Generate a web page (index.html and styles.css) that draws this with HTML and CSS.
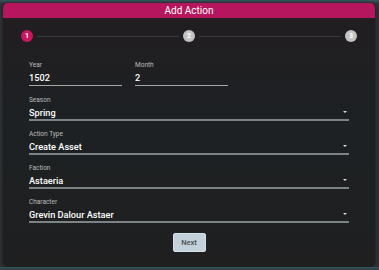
FILE: index.html
```html
<!DOCTYPE html>
<html lang="en">

<head>
    <meta charset="UTF-8">
    <title>Add Action</title>
    <link rel="stylesheet" href="styles.css">
</head>

<body>
    <div class="dialog">
        <div class="dialog-title">Add Action</div>

        <div class="stepper">
            <span class="step active">1</span>
            <span class="step-line"></span>
            <span class="step">2</span>
            <span class="step-line"></span>
            <span class="step">3</span>
        </div>

        <form class="form">
            <div class="row">
                <div class="field text-field">
                    <label>Year</label>
                    <div class="value">1502</div>
                </div>
                <div class="field text-field">
                    <label>Month</label>
                    <div class="value">2</div>
                </div>
            </div>
            <div class="field select-field">
                <label>Season</label>
                <div class="value">Spring<span class="arrow"></span></div>
            </div>
            <div class="field select-field">
                <label>Action Type</label>
                <div class="value">Create Asset<span class="arrow"></span></div>
            </div>
            <div class="field select-field">
                <label>Faction</label>
                <div class="value">Astaeria<span class="arrow"></span></div>
            </div>
            <div class="field select-field">
                <label>Character</label>
                <div class="value">Grevin Dalour Astaer<span class="arrow"></span></div>
            </div>
            <div class="actions">
                <button type="button">Next</button>
            </div>
        </form>
    </div>
</body>

</html>
```

FILE: styles.css
```css
body {
    margin: 0;
    background: linear-gradient(#2f5a5c 0, #3a3440 3px, #2c3033 4px);
    font-family: 'Roboto', 'Liberation Sans', sans-serif;
    color: #fff;
}
.dialog {
    margin: 3px 4px 0 3px;
    height: 264px;
    border-radius: 5px;
    overflow: hidden;
    background: linear-gradient(#221d21, #1d2123 45%, #1f1f20);
    box-shadow: 0 0 2px rgba(0, 0, 0, 0.6);
}
.dialog-title {
    height: 15px;
    line-height: 15px;
    background-color: #b5165d;
    text-align: center;
    font-size: 10px;
}
.stepper {
    display: flex;
    align-items: center;
    padding: 12px 18px 0 18px;
}
.step {
    width: 12px;
    height: 12px;
    border-radius: 50%;
    background-color: #c2c2c2;
    color: #fff;
    font-size: 7px;
    font-weight: bold;
    line-height: 12px;
    text-align: center;
}
.step.active {
    background-color: #c8175f;
}
.step-line {
    flex: 1;
    height: 1px;
    margin: 0 4px;
    background-color: #3a3c3e;
}
.form {
    margin: 19px 0 0 0;
    padding: 0 26px;
}
.row {
    display: flex;
    gap: 13px;
    margin-bottom: 10px;
}
.field label {
    display: block;
    height: 9px;
    line-height: 9px;
    font-size: 6.5px;
    color: #bdbdbd;
}
.field .value {
    display: flex;
    align-items: center;
    justify-content: space-between;
    font-size: 9.2px;
    font-weight: 500;
}
.text-field {
    width: 93px;
}
.text-field .value {
    height: 15px;
    border-bottom: 1px solid #a4a8a8;
}
.select-field {
    margin-bottom: 9px;
}
.select-field .value {
    height: 14px;
    border-bottom: 2px solid #7b8384;
}
.arrow {
    width: 0;
    height: 0;
    margin-right: 2px;
    border-left: 2.5px solid transparent;
    border-right: 2.5px solid transparent;
    border-top: 2.5px solid #dedede;
}
.actions {
    display: flex;
    justify-content: center;
    padding-top: 1px;
}
button {
    width: 33px;
    height: 19px;
    padding: 0;
    border: 1px solid #d6e0e6;
    border-radius: 2px;
    background-color: #c3d1da;
    color: #4a4f53;
    font-family: 'Roboto', 'Liberation Sans', sans-serif;
    font-size: 7.5px;
    font-weight: 500;
}
```
